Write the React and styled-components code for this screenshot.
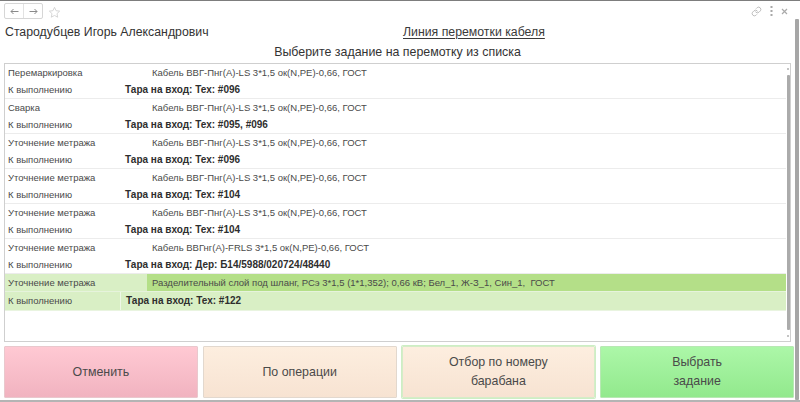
import React from "react";
import styled, { createGlobalStyle, css } from "styled-components";

const font = css`
  font-family: "Liberation Sans", Arial, sans-serif;
`;

const GlobalStyle = createGlobalStyle`
  html, body { margin: 0; padding: 0; background: #fff; }
  body { font-family: "Liberation Sans", Arial, sans-serif; }
`;

const Window = styled.div`
  ${font};
  width: 800px;
  height: 402px;
  display: flex;
  border-top: 1px solid #7d7d7d;
  border-bottom: 2px solid #b4b4b4;
  background: #fff;
  overflow: hidden;
  box-sizing: border-box;
`;

const Main = styled.div`
  width: 795px;
  display: flex;
  flex-direction: column;
`;

const OuterScroll = styled.div`
  width: 4px;
  margin: 18px 1px 0 0;
  background: #a6a6a6;
  border-radius: 1px;
`;

const TopBar = styled.div`
  height: 22px;
  display: flex;
  align-items: center;
  justify-content: space-between;
  padding: 0 7px 0 4px;
`;

const NavGroup = styled.div`
  display: flex;
  align-items: center;
  gap: 5px;
`;

const NavButtons = styled.div`
  display: flex;
  height: 14px;
  border: 1px solid #d6d6d6;
  border-radius: 2px;
  margin-top: -2px;
`;

const NavButton = styled.div`
  width: 18px;
  display: flex;
  align-items: center;
  justify-content: center;
  & + & { border-left: 1px solid #e2e2e2; }
`;

const ToolIcons = styled.div`
  display: flex;
  align-items: center;
  gap: 8px;
  color: #b8b8b8;
  margin-top: -2px;
`;

const HeaderRow = styled.div`
  ${font};
  display: grid;
  grid-template-columns: 398px 1fr;
  padding-left: 5px;
  height: 18px;
  font-size: 12.3px;
  line-height: 18px;
  color: #333;
`;

const UserName = styled.div``;

const LineTitle = styled.div`
  text-decoration: underline;
  text-underline-offset: 2px;
  color: #3a3a3a;
`;

const Subtitle = styled.div`
  ${font};
  margin-top: 3px;
  text-align: center;
  font-size: 12.4px;
  line-height: 17px;
  color: #333;
`;

const Table = styled.div`
  margin: 2px 4px 0 4px;
  height: 277px;
  border: 1px solid #cfcfcf;
  display: flex;
`;

const Rows = styled.div`
  flex: 1;
  display: flex;
  flex-direction: column;
`;

const Pair = styled.div`
  background: ${(p) => (p.$selected ? "#d9efc5" : "#fff")};
  border-bottom: 1px solid ${(p) => (p.$selected ? "#e9f4e0" : "#ececec")};
`;

const Row = styled.div`
  display: grid;
  grid-template-columns: ${(p) => p.$first}px 1fr;
  height: ${(p) => (p.$divided ? 18 : 17)}px;
  line-height: 17px;
  border-top: ${(p) => (p.$divided ? "1px solid #e6f3dc" : "0")};
`;

const Cell = styled.div`
  ${font};
  font-size: ${(p) => (p.$bold ? "10px" : "9.5px")};
  padding-left: ${(p) => p.$pad}px;
  white-space: pre;
  overflow: hidden;
  font-weight: ${(p) => (p.$bold ? 700 : 400)};
  color: ${(p) => (p.$bold ? "#2e2e2e" : "#4a4a4a")};
  background: ${(p) => (p.$active ? "#b4df88" : "transparent")};
  border-left: ${(p) => (p.$divider ? "1px solid #eef7e6" : "0")};
`;

const TableScroll = styled.div`
  width: 4px;
  display: flex;
  flex-direction: column;
  align-items: center;
  padding: 4px 0 4px;
  gap: 5px;
`;

const ScrollDot = styled.div`
  width: 2px;
  height: 2px;
  background: #c4c4c4;
`;

const ScrollThumb = styled.div`
  flex: 1;
  width: 3px;
  background: #ababab;
  border-radius: 1px;
`;

const ButtonRow = styled.div`
  margin-top: 4px;
  padding: 0 1px 0 4px;
  display: grid;
  grid-template-columns: repeat(4, 1fr);
  gap: 5px;
`;

const Button = styled.div`
  ${font};
  box-sizing: border-box;
  height: 52px;
  display: flex;
  align-items: center;
  justify-content: center;
  text-align: center;
  font-size: 12.4px;
  line-height: 19px;
  color: #4a4a4a;
  border: 1px solid ${(p) => p.$border};
  border-radius: 1px;
  background: linear-gradient(to bottom, ${(p) => p.$top}, ${(p) => p.$bottom});
  box-shadow: ${(p) => (p.$focus ? "0 0 0 1px #cdeec4" : "none")};
`;

const tasks = [
  { op: "Перемаркировка", item: "Кабель ВВГ-Пнг(А)-LS 3*1,5 ок(N,PE)-0,66, ГОСТ", tara: "Тара на вход: Тех: #096" },
  { op: "Сварка", item: "Кабель ВВГ-Пнг(А)-LS 3*1,5 ок(N,PE)-0,66, ГОСТ", tara: "Тара на вход: Тех: #095, #096" },
  { op: "Уточнение метража", item: "Кабель ВВГ-Пнг(А)-LS 3*1,5 ок(N,PE)-0,66, ГОСТ", tara: "Тара на вход: Тех: #096" },
  { op: "Уточнение метража", item: "Кабель ВВГ-Пнг(А)-LS 3*1,5 ок(N,PE)-0,66, ГОСТ", tara: "Тара на вход: Тех: #104" },
  { op: "Уточнение метража", item: "Кабель ВВГ-Пнг(А)-LS 3*1,5 ок(N,PE)-0,66, ГОСТ", tara: "Тара на вход: Тех: #104" },
  { op: "Уточнение метража", item: "Кабель ВВГнг(А)-FRLS 3*1,5 ок(N,PE)-0,66, ГОСТ", tara: "Тара на вход: Дер: Б14/5988/020724/48440" },
  { op: "Уточнение метража", item: "Разделительный слой под шланг, РСэ 3*1,5 (1*1,352); 0,66 кВ; Бел_1, Ж-З_1, Син_1,  ГОСТ", tara: "Тара на вход: Тех: #122", selected: true },
];

const LinkIcon = () => (
  <svg width="11" height="11" viewBox="0 0 24 24" fill="none" stroke="currentColor" strokeWidth="2" strokeLinecap="round">
    <path d="M10 13a5 5 0 0 0 7.5.5l3-3a5 5 0 0 0-7-7l-1.7 1.7" />
    <path d="M14 11a5 5 0 0 0-7.5-.5l-3 3a5 5 0 0 0 7 7l1.7-1.7" />
  </svg>
);

const KebabIcon = () => (
  <svg width="3" height="10" viewBox="0 0 3 10" fill="#a8a8a8">
    <rect x="0.5" y="0" width="2" height="2" />
    <rect x="0.5" y="4" width="2" height="2" />
    <rect x="0.5" y="8" width="2" height="2" />
  </svg>
);

const CloseIcon = () => (
  <svg width="7" height="7" viewBox="0 0 7 7" stroke="#aaa" strokeWidth="1.2">
    <path d="M1 1L6 6M6 1L1 6" />
  </svg>
);

const StarIcon = () => (
  <svg width="13" height="13" viewBox="0 0 24 24" fill="none" stroke="#cfcfcf" strokeWidth="1.6" strokeLinejoin="round">
    <path d="M12 2.5l2.9 6.2 6.6.8-4.9 4.6 1.3 6.6L12 17.4l-5.9 3.3 1.3-6.6L2.5 9.5l6.6-.8z" />
  </svg>
);

const Arrow = ({ dir }) => (
  <svg width="9" height="7" viewBox="0 0 9 7" fill="none" stroke="#8a8a8a" strokeWidth="1">
    {dir === "left" ? <path d="M8.5 3.5H1M3.5 1L1 3.5 3.5 6" /> : <path d="M0.5 3.5H8M5.5 1L8 3.5 5.5 6" />}
  </svg>
);

export default function App() {
  return (
    <>
      <GlobalStyle />
      <Window>
        <Main>
          <TopBar>
            <NavGroup>
              <NavButtons>
                <NavButton><Arrow dir="left" /></NavButton>
                <NavButton><Arrow dir="right" /></NavButton>
              </NavButtons>
              <StarIcon />
            </NavGroup>
            <ToolIcons>
              <LinkIcon />
              <KebabIcon />
              <CloseIcon />
            </ToolIcons>
          </TopBar>
          <HeaderRow>
            <UserName>Стародубцев Игорь Александрович</UserName>
            <LineTitle>Линия перемотки кабеля</LineTitle>
          </HeaderRow>
          <Subtitle>Выберите задание на перемотку из списка</Subtitle>
          <Table>
            <Rows>
              {tasks.map((t, i) => (
                <Pair key={i} $selected={t.selected}>
                  <Row $first={142}>
                    <Cell $pad={3}>{t.op}</Cell>
                    <Cell $pad={5} $active={t.selected}>{t.item}</Cell>
                  </Row>
                  <Row $first={115} $divided={t.selected}>
                    <Cell $pad={3}>К выполнению</Cell>
                    <Cell $pad={5} $bold $divider={t.selected}>{t.tara}</Cell>
                  </Row>
                </Pair>
              ))}
            </Rows>
            <TableScroll>
              <ScrollDot />
              <ScrollThumb />
              <ScrollDot />
            </TableScroll>
          </Table>
          <ButtonRow>
            <Button $top="#ffc9d3" $bottom="#f1b3c0" $border="#e9c8cd">Отменить</Button>
            <Button $top="#fdeedf" $bottom="#f7e3d2" $border="#e2d8ce">По операции</Button>
            <Button $top="#fdeedf" $bottom="#f7e3d2" $border="#d5ecc8" $focus>Отбор по номеру<br />барабана</Button>
            <Button $top="#acf7a8" $bottom="#92e98d" $border="#b8e8b4">Выбрать<br />задание</Button>
          </ButtonRow>
        </Main>
        <OuterScroll />
      </Window>
    </>
  );
}
